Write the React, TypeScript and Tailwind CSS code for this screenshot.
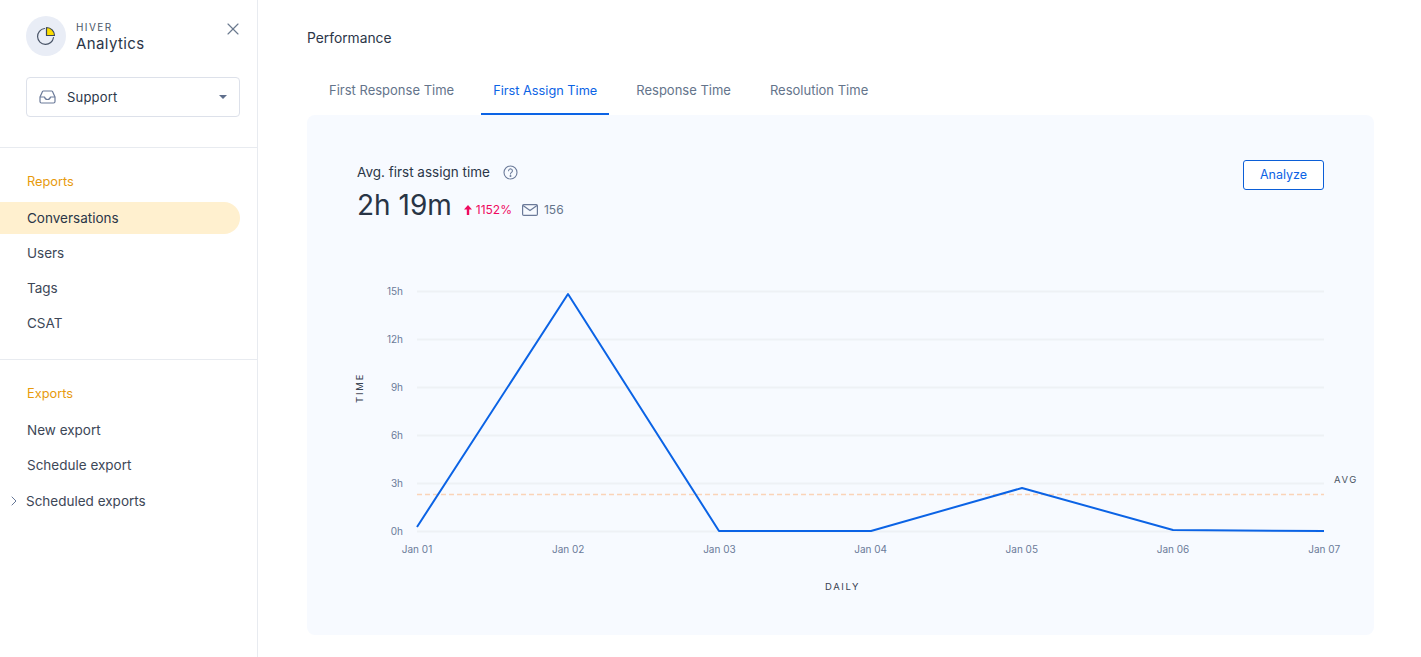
import { ChevronRight, X } from "lucide-react";

const reports = ["Conversations", "Users", "Tags", "CSAT"];
const tabs = ["First Response Time", "First Assign Time", "Response Time", "Resolution Time"];
const days = ["Jan 01", "Jan 02", "Jan 03", "Jan 04", "Jan 05", "Jan 06", "Jan 07"];
const hours = ["15h", "12h", "9h", "6h", "3h", "0h"];

function Chart() {
  return (
    <svg width="1067" height="344" viewBox="307 270 1067 344" className="block">
      {hours.map((h, i) => (
        <g key={h}>
          <line x1="417" x2="1324" y1={291.5 + i * 48} y2={291.5 + i * 48} stroke="#eef1f5" strokeWidth="2" />
          <text x="403" y={295 + i * 48} textAnchor="end" fontSize="10" fill="#6b7a99">{h}</text>
        </g>
      ))}
      {days.map((d, i) => (
        <text key={d} x={417 + i * 151.2} y="553" textAnchor="middle" fontSize="10" fill="#6b7a99">{d}</text>
      ))}
      <line x1="417" x2="1324" y1="494.5" y2="494.5" stroke="#fad4b8" strokeWidth="1.5" strokeDasharray="5 3" />
      <polyline
        points="417,527 568,294 719,531 871,531 1022,488 1173,530 1324,531"
        fill="none"
        stroke="#0b63e5"
        strokeWidth="2"
        strokeLinejoin="round"
      />
      <text x="1334" y="483" fontSize="9.5" letterSpacing="1.6" fill="#4b5563">AVG</text>
      <text x="825" y="590" fontSize="9.5" letterSpacing="1.6" fill="#374151">DAILY</text>
      <text transform="translate(363 403) rotate(-90)" fontSize="9.5" letterSpacing="1.8" fill="#374151">TIME</text>
    </svg>
  );
}

export default function App() {
  return (
    <div className="flex h-[657px] overflow-hidden bg-white font-['Inter',sans-serif] text-[#2b3648]">
      <aside className="w-[258px] shrink-0 border-r border-[#e8ebf0]">
        <div className="px-[26px] pt-4">
          <div className="flex items-start">
            <div className="flex h-10 w-10 items-center justify-center rounded-full bg-[#e9edf6]">
              <svg width="20" height="20" viewBox="0 0 20 20" fill="none">
                <path d="M8.5 2.5a8 8 0 1 0 9 9" stroke="#4a5568" strokeWidth="1.2" strokeLinecap="round" />
                <path d="M10.5 1.5a8 8 0 0 1 8 8h-8z" fill="#fbdc00" stroke="#3b4658" strokeWidth="1.2" strokeLinejoin="round" />
              </svg>
            </div>
            <div className="ml-[10px] mt-[5px] flex-1">
              <div className="text-[10px] leading-3 tracking-[1.4px] text-[#4a5568]">HIVER</div>
              <div className="mt-px text-[15px] leading-5 tracking-[0.4px]">Analytics</div>
            </div>
            <X size={20} strokeWidth={1.4} className="-mr-[12px] mt-[3px] text-[#6b7a8f]" />
          </div>
          <div className="mt-[21px] flex h-10 w-[214px] items-center rounded border border-[#dde1ea] pl-[12px] pr-[12px]">
            <svg width="17" height="14" viewBox="0 0 17 14" fill="none" stroke="#6b7a99" strokeWidth="1.2" strokeLinejoin="round">
              <path d="M1 7l2.5-5.5a1 1 0 0 1 1-.5h8a1 1 0 0 1 1 .5L16 7v4.5a1.5 1.5 0 0 1-1.5 1.5h-12A1.5 1.5 0 0 1 1 11.5z" />
              <path d="M1 7h4.5c.5 2 1.5 2.5 3 2.5s2.5-.5 3-2.5H16" />
            </svg>
            <span className="ml-[11px] mt-[2px] flex-1 text-[13px] tracking-[0.2px]">Support</span>
            <span className="h-0 w-0 border-x-4 border-t-[4px] border-x-transparent border-t-[#5f6f8c]" />
          </div>
        </div>
        <div className="mt-[30px] border-t border-[#e8ebf0] pb-[19px] pt-[26px]">
          <div className="px-[27px] text-[12.8px] leading-4 text-[#e79a0c]">Reports</div>
          <ul className="mt-[12px] text-[13.5px] leading-5">
            {reports.map((r, i) => (
              <li
                key={r}
                className={
                  i === 0
                    ? "mb-px flex h-8 w-[240px] items-center rounded-r-full bg-[#fff0cf] pl-[27px]"
                    : "flex h-[35px] items-center pl-[27px] text-[#3d4757]"
                }
              >
                {r}
              </li>
            ))}
          </ul>
        </div>
        <div className="border-t border-[#e8ebf0] pt-[26px]">
          <div className="px-[27px] text-[12.8px] leading-4 text-[#e79a0c]">Exports</div>
          <ul className="mt-[10px] text-[13.5px] leading-5 text-[#3d4757]">
            <li className="flex h-[35px] items-center pl-[27px]">New export</li>
            <li className="flex h-[35px] items-center pl-[27px]">Schedule export</li>
            <li className="flex h-[37px] items-center pl-[6px]">
              <ChevronRight size={16} strokeWidth={1.3} className="mr-[4px] text-[#4f6288]" />
              Scheduled exports
            </li>
          </ul>
        </div>
      </aside>

      <main className="flex-1 pl-[49px] pr-[47px]">
        <h1 className="pt-[30px] text-[13.8px] leading-4 text-[#2b3648]">Performance</h1>
        <div className="ml-[10px] mt-[20px] flex h-[49px] items-stretch gap-[15px]">
          {tabs.map((t, i) => (
            <div
              key={t}
              className={
                i === 1
                  ? "flex items-center border-b-2 border-[#0b63e5] px-3 pt-[2px] text-[12.75px] text-[#0b63e5]"
                  : "flex items-center border-b-2 border-transparent px-3 pt-[2px] text-[13px] text-[#64748b]"
              }
            >
              {t}
            </div>
          ))}
        </div>
        <section className="h-[520px] rounded-lg bg-[#f7faff]">
          <div className="flex items-start justify-between pl-[50px] pr-[50px] pt-[45px]">
            <div>
              <div className="flex h-6 items-center text-[13.5px]">
                Avg. first assign time
                <svg width="15" height="15" viewBox="0 0 15 15" fill="none" stroke="#6b7a99" strokeWidth="1.1" className="ml-[13px]">
                  <circle cx="7.5" cy="7.5" r="6.5" />
                  <path d="M5.6 5.8a1.9 1.9 0 1 1 2.9 1.6c-.6.4-1 .8-1 1.5" strokeLinecap="round" />
                  <circle cx="7.5" cy="11" r=".4" fill="#6b7a99" />
                </svg>
              </div>
              <div className="mt-[3px] flex items-center">
                <span className="text-[28px] leading-9 text-[#283445]">2h 19m</span>
                <div className="mt-[10px] flex items-center">
                  <svg width="8" height="10" viewBox="0 0 8 10" fill="#ef0a5f" className="ml-3">
                    <path d="M4 0l4 4.5H5.2V10H2.8V4.5H0z" />
                  </svg>
                  <span className="ml-1 text-xs text-[#ef0a5f]">1152%</span>
                  <svg width="16" height="12" viewBox="0 0 16 12" fill="none" stroke="#6b7a99" strokeWidth="1.2" className="ml-[10px]">
                    <rect x=".6" y=".6" width="14.8" height="10.8" rx="1.2" />
                    <path d="M1 1.5l7 5 7-5" />
                  </svg>
                  <span className="ml-[6px] text-xs text-[#64748b]">156</span>
                </div>
              </div>
            </div>
            <button className="h-[30px] w-[81px] rounded-[3px] border border-[#0b5ed7] bg-white pt-px text-[12.5px] text-[#0b63e5]">
              Analyze
            </button>
          </div>
          <div className="mt-[47px]">
            <Chart />
          </div>
        </section>
      </main>
    </div>
  );
}
